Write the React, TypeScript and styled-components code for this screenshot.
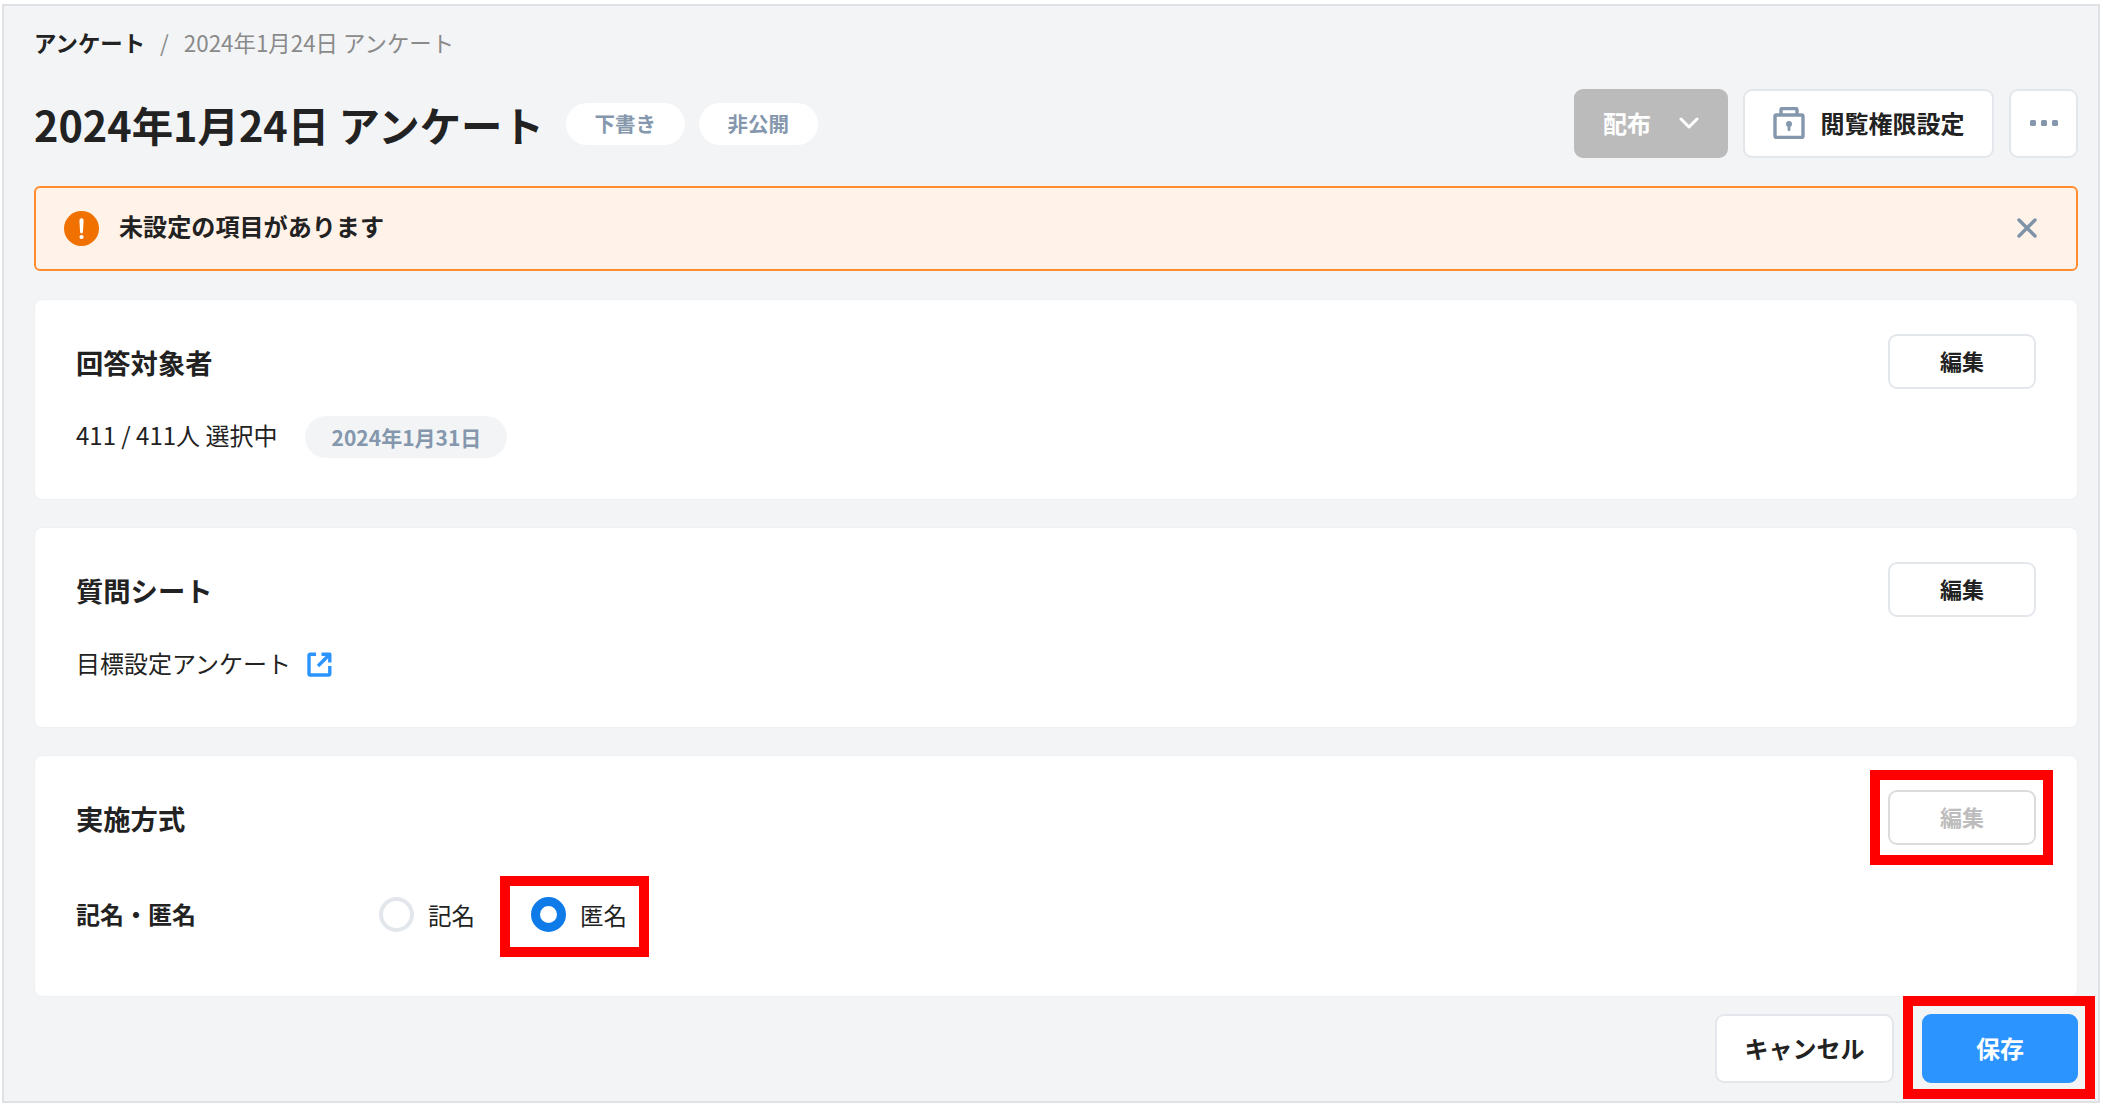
import styled, { createGlobalStyle } from "styled-components";

const GlobalStyle = createGlobalStyle`
  html, body {
    margin: 0;
    padding: 0;
    background: #fff;
  }
  body {
    font-family: "Noto Sans CJK JP", "Noto Sans", sans-serif;
    color: #222;
  }
  * {
    box-sizing: border-box;
  }
`;

const Page = styled.div`
  width: 2103px;
  height: 1104px;
  padding: 4px 3px 1px 2px;
`;
const Frame = styled.main`
  height: 100%;
  border: 2px solid #dfe1e4;
  background: #f3f4f6;
  padding: 23px 20px 0 30px;
  display: flex;
  flex-direction: column;
`;
const Breadcrumb = styled.nav`
  display: flex;
  align-items: center;
  height: 32px;
  padding-bottom: 6px;
  font-size: 22.4px;
  color: #8a8a8a;
  span + span {
    margin-left: 15px;
  }
`;
const CrumbRoot = styled.span`
  font-weight: 700;
  color: #222;
`;
const TitleRow = styled.header`
  display: flex;
  align-items: center;
  height: 69px;
  margin-top: 28px;
`;
const Title = styled.h1`
  margin: 0;
  font-size: 41.4px;
  font-weight: 700;
  color: #222;
  white-space: nowrap;
`;
const StatusPill = styled.span`
  display: flex;
  align-items: center;
  justify-content: center;
  width: 119px;
  height: 42px;
  margin-left: 14px;
  padding-bottom: 2px;
  border-radius: 21px;
  background: #fff;
  color: #8497ac;
  font-size: 20.5px;
  font-weight: 700;
  &:first-of-type {
    margin-left: 22px;
  }
`;
const Actions = styled.div`
  display: flex;
  gap: 15px;
  margin-left: auto;
`;
const Button = styled.button<{ $width: number; $height?: number; $gap?: number }>`
  display: flex;
  align-items: center;
  justify-content: center;
  gap: ${(p) => p.$gap ?? 0}px;
  width: ${(p) => p.$width}px;
  height: ${(p) => p.$height ?? 69}px;
  padding: 0 0 2px;
  border: 2px solid #e3e7ec;
  border-radius: 9px;
  background: #fff;
  color: #222;
  font-family: inherit;
  font-size: 24px;
  font-weight: 700;
`;
const DisabledButton = styled(Button)`
  border-color: #bbbbbb;
  background: #bbbbbb;
  color: #fff;
`;
const PrimaryButton = styled(Button)`
  border-color: #2b94ff;
  background: #2b94ff;
  color: #fff;
`;
const EditButton = styled(Button)<{ $muted?: boolean }>`
  padding-bottom: 4px;
  font-size: 22px;
  border-color: ${(p) => (p.$muted ? "#dcdcdc" : "#e3e7ec")};
  color: ${(p) => (p.$muted ? "#bdbdbd" : "#222")};
`;
const Alert = styled.div`
  display: flex;
  align-items: center;
  height: 85px;
  margin-top: 28px;
  padding: 0 38px 0 28px;
  border: 2px solid #ff8c2e;
  border-radius: 6px;
  background: #fff2e8;
  font-size: 24.1px;
  font-weight: 700;
  color: #222;
`;
const AlertText = styled.span`
  margin-left: 20px;
  padding-bottom: 6px;
`;
const AlertClose = styled.span`
  display: flex;
  margin-left: auto;
  padding-bottom: 1px;
`;
const Card = styled.section<{ $height: number; $gapTop?: number }>`
  height: ${(p) => p.$height}px;
  margin-top: ${(p) => p.$gapTop ?? 27}px;
  padding: 34px 41px 0;
  border: 1px solid #eef0f2;
  border-radius: 8px;
  background: #fff;
`;
const CardHead = styled.div`
  display: flex;
  align-items: center;
  justify-content: space-between;
  height: 55px;
`;
const CardTitle = styled.h2`
  margin: 0;
  font-size: 27.3px;
  font-weight: 700;
  color: #222;
`;
const CardBody = styled.div`
  display: flex;
  align-items: center;
  height: 42px;
  margin-top: 27px;
  font-size: 24px;
  color: #222;
`;
const BodyText = styled.span`
  padding-bottom: 5px;
`;
const DatePill = styled.span`
  display: flex;
  align-items: center;
  justify-content: center;
  width: 202px;
  height: 42px;
  margin-left: 28px;
  border-radius: 21px;
  background: #f3f4f6;
  color: #8497ac;
  font-size: 21px;
  font-weight: 700;
`;
const LinkIcon = styled.svg`
  margin-left: 16px;
  margin-bottom: 2px;
`;
const FieldRow = styled.div`
  display: flex;
  align-items: center;
  height: 36px;
  margin-top: 51px;
`;
const FieldLabel = styled.span`
  width: 303px;
  padding-bottom: 2px;
  font-size: 24px;
  font-weight: 700;
  color: #222;
`;
const RadioGroup = styled.div`
  display: flex;
  align-items: center;
  gap: 56px;
`;
const RadioOption = styled.label`
  display: flex;
  align-items: center;
  gap: 14px;
  height: 35px;
  font-size: 23.5px;
  color: #222;
`;
const OptionText = styled.span`
  padding-top: 2px;
`;
const RadioMark = styled.span<{ $checked?: boolean }>`
  width: 35px;
  height: 35px;
  border-radius: 50%;
  border: ${(p) => (p.$checked ? "9px solid #0f7be8" : "4px solid #e3e7ec")};
  background: #fff;
`;
// the red marks drawn over the screenshot, placed around whatever they wrap
const Highlight = styled.span<{ $inset: string }>`
  position: relative;
  display: inline-flex;
  &::after {
    content: "";
    position: absolute;
    inset: ${(p) => p.$inset};
    border: 10px solid #ff0000;
    pointer-events: none;
  }
`;
const Footer = styled.footer`
  display: flex;
  justify-content: flex-end;
  gap: 28px;
  margin-top: 17px;
`;

export default function App() {
  return (
    <Page>
      <GlobalStyle />
      <Frame>
        <Breadcrumb>
          <CrumbRoot>アンケート</CrumbRoot>
          <span>/</span>
          <span>2024年1月24日 アンケート</span>
        </Breadcrumb>
        <TitleRow>
          <Title>2024年1月24日 アンケート</Title>
          <StatusPill>下書き</StatusPill>
          <StatusPill>非公開</StatusPill>
          <Actions>
            <DisabledButton $width={154} $gap={28}>
              配布
              <svg width="20" height="12" viewBox="0 0 20 12" fill="none">
                <path d="M2 2l8 8 8-8" stroke="#fff" strokeWidth="3" strokeLinecap="round" strokeLinejoin="round" />
              </svg>
            </DisabledButton>
            <Button $width={251} $gap={16}>
              <svg width="32" height="32" viewBox="0 0 32 32" fill="none">
                <path d="M8 7V3a1.5 1.5 0 0 1 1.5-1.5h13A1.5 1.5 0 0 1 24 3v4" stroke="#8497ac" strokeWidth="3.4" />
                <rect x="2" y="8" width="28" height="22.5" rx="1.5" stroke="#8497ac" strokeWidth="3.4" />
                <circle cx="16" cy="17" r="3" fill="#8497ac" />
                <rect x="14.6" y="17" width="2.8" height="7" rx="1" fill="#8497ac" />
              </svg>
              閲覧権限設定
            </Button>
            <Button $width={69}>
              <svg width="30" height="8" viewBox="0 0 30 8" fill="#8497ac">
                <rect x="1" y="1" width="6" height="6" rx="1.5" />
                <rect x="12" y="1" width="6" height="6" rx="1.5" />
                <rect x="23" y="1" width="6" height="6" rx="1.5" />
              </svg>
            </Button>
          </Actions>
        </TitleRow>
        <Alert>
          <svg width="35" height="35" viewBox="0 0 35 35">
            <circle cx="17.5" cy="17.5" r="17.5" fill="#f07000" />
            <path d="M15.4 9.4a2.1 2.1 0 0 1 4.2 0L18.9 21a1.4 1.4 0 0 1-2.8 0z" fill="#fff" />
            <circle cx="17.5" cy="26" r="2.1" fill="#fff" />
          </svg>
          <AlertText>未設定の項目があります</AlertText>
          <AlertClose>
            <svg width="22" height="22" viewBox="0 0 22 22" fill="none">
              <path d="M3 3l16 16M19 3L3 19" stroke="#7f93a8" strokeWidth="3.4" strokeLinecap="round" />
            </svg>
          </AlertClose>
        </Alert>
        <Card $height={201} $gapTop={28}>
          <CardHead>
            <CardTitle>回答対象者</CardTitle>
            <EditButton $width={148} $height={55}>編集</EditButton>
          </CardHead>
          <CardBody>
            <BodyText>411 / 411人 選択中</BodyText>
            <DatePill>2024年1月31日</DatePill>
          </CardBody>
        </Card>
        <Card $height={201}>
          <CardHead>
            <CardTitle>質問シート</CardTitle>
            <EditButton $width={148} $height={55}>編集</EditButton>
          </CardHead>
          <CardBody>
            <BodyText>目標設定アンケート</BodyText>
            <LinkIcon width="25" height="25" viewBox="0 0 25 25" fill="none">
              <path d="M9 2.2H3.2a1.2 1.2 0 0 0-1.2 1.2v18.4a1.2 1.2 0 0 0 1.2 1.2h18.4a1.2 1.2 0 0 0 1.2-1.2V14" stroke="#2b94ff" strokeWidth="3.4" />
              <path d="M14.5 2.2h8.3v8.3" stroke="#2b94ff" strokeWidth="3.4" strokeLinejoin="round" />
              <path d="M22 3L11 14" stroke="#2b94ff" strokeWidth="3.4" />
            </LinkIcon>
          </CardBody>
        </Card>
        <Card $height={242}>
          <CardHead>
            <CardTitle>実施方式</CardTitle>
            <Highlight $inset="-20px -17px -20px -18px">
              <EditButton $width={148} $height={55} $muted>編集</EditButton>
            </Highlight>
          </CardHead>
          <FieldRow>
            <FieldLabel>記名・匿名</FieldLabel>
            <RadioGroup>
              <RadioOption>
                <RadioMark />
                <OptionText>記名</OptionText>
              </RadioOption>
              <Highlight $inset="-21px -22px -25px -31px">
                <RadioOption>
                  <RadioMark $checked />
                  <OptionText>匿名</OptionText>
                </RadioOption>
              </Highlight>
            </RadioGroup>
          </FieldRow>
        </Card>
        <Footer>
          <Button $width={179}>キャンセル</Button>
          <Highlight $inset="-18px -17px -16px -19px">
            <PrimaryButton $width={156}>保存</PrimaryButton>
          </Highlight>
        </Footer>
      </Frame>
    </Page>
  );
}
